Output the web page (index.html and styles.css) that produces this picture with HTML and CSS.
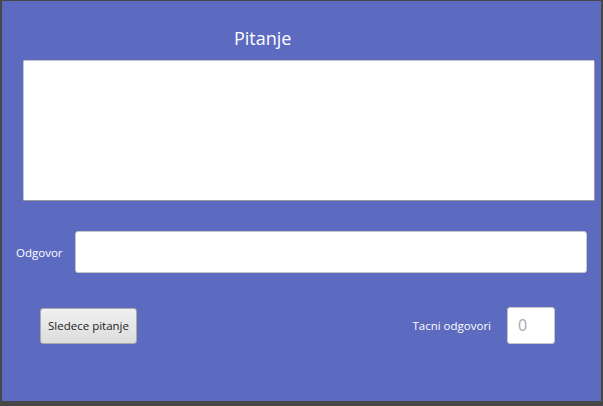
FILE: index.html
```html
<!DOCTYPE html>
<html>
<head>
<meta charset="utf-8">
<link rel="stylesheet" href="styles.css">
</head>
<body>
<div class="frame">
  <div class="title">Pitanje</div>
  <div class="question"></div>
  <div class="answer-row">
    <span class="label">Odgovor</span>
    <div class="answer-field"></div>
  </div>
  <div class="bottom-row">
    <button class="next-btn">Sledece pitanje</button>
    <div class="score">
      <span class="label">Tacni odgovori</span>
      <div class="score-field">0</div>
    </div>
  </div>
</div>
</body>
</html>
```
FILE: styles.css
```css
html, body {
  margin: 0;
  padding: 0;
}
body {
  font-family: "Open Sans", "Noto Sans", sans-serif;
}
.frame {
  width: 603px;
  height: 406px;
  box-sizing: border-box;
  background: #5c6bc0;
  border-style: solid;
  border-color: #474747;
  border-width: 1px 2px 5px 2px;
  display: flex;
  flex-direction: column;
}
.title {
  color: #ffffff;
  font-size: 18px;
  line-height: 24px;
  margin-top: 25px;
  padding-left: 232px;
  height: 34px;
}
.question {
  margin-left: 21px;
  width: 572px;
  height: 141px;
  box-sizing: border-box;
  background: #ffffff;
  border: 1px solid #c8c8c8;
  border-right-color: #9a9a9a;
  border-bottom-color: #9a9a9a;
  border-radius: 2px;
}
.answer-row {
  display: flex;
  align-items: center;
  margin-top: 30px;
  padding-left: 14px;
  gap: 12px;
}
.label {
  color: #ffffff;
  font-size: 11.5px;
}
.answer-field {
  width: 512px;
  height: 42px;
  box-sizing: border-box;
  background: #ffffff;
  border: 1px solid #c8c8c8;
  border-radius: 3px;
}
.bottom-row {
  display: flex;
  align-items: center;
  justify-content: space-between;
  margin-top: 34px;
  padding-left: 38px;
  padding-right: 46px;
}
.next-btn {
  width: 97px;
  height: 36px;
  box-sizing: border-box;
  padding: 0;
  font-family: "Open Sans", "Noto Sans", sans-serif;
  font-size: 11.5px;
  color: #222222;
  background: linear-gradient(#f0f0f0, #dddddd);
  border: 1px solid #a9a9a9;
  border-radius: 3px;
}
.score {
  display: flex;
  align-items: center;
  gap: 16px;
}
.score-field {
  width: 48px;
  height: 37px;
  box-sizing: border-box;
  background: #ffffff;
  border: 1px solid #c8c8c8;
  border-radius: 3px;
  color: #a8a8b0;
  font-size: 16px;
  line-height: 35px;
  padding-left: 10px;
}
```
